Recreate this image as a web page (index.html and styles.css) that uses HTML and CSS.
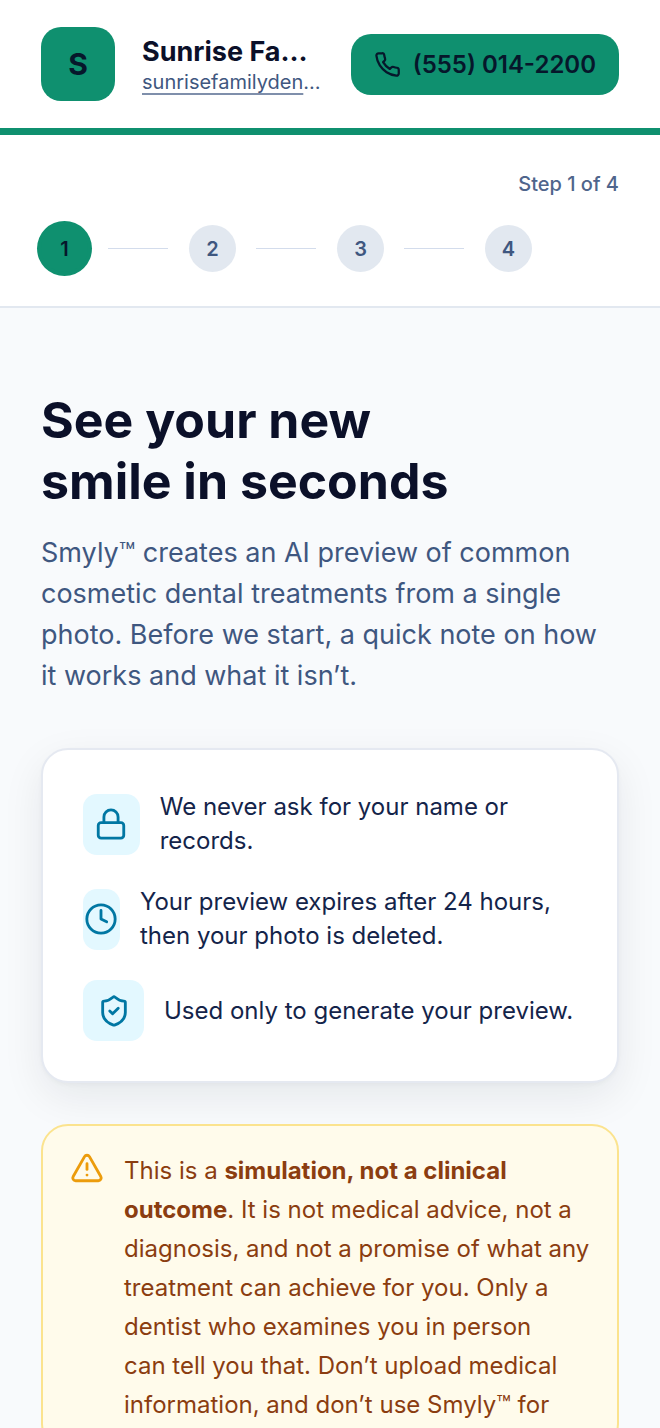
FILE: index.html
```html
<!DOCTYPE html>
<html lang="en">
<head>
    <meta charset="utf-8">
    <meta name="viewport" content="width=device-width, initial-scale=1">
    <title>Sunrise Family Dental</title>
    <link rel="stylesheet" href="styles.css">
</head>
<body>
    <header class="site-header">
        <div class="logo">S</div>
        <div class="clinic">
            <div class="clinic-name">Sunrise Family Dental</div>
            <div class="clinic-url"><a href="#">sunrisefamilydental.com</a></div>
        </div>
        <a class="call-button" href="tel:+15550142200">
            <svg class="icon" viewBox="0 0 24 24"><path d="M22 16.92v3a2 2 0 0 1-2.18 2 19.79 19.79 0 0 1-8.63-3.07 19.5 19.5 0 0 1-6-6 19.79 19.79 0 0 1-3.07-8.67A2 2 0 0 1 4.11 2h3a2 2 0 0 1 2 1.72 12.84 12.84 0 0 0 .7 2.81 2 2 0 0 1-.45 2.11L8.09 9.91a16 16 0 0 0 6 6l1.27-1.27a2 2 0 0 1 2.11-.45 12.84 12.84 0 0 0 2.81.7A2 2 0 0 1 22 16.92z"/></svg>
            (555) 014-2200
        </a>
    </header>

    <nav class="progress">
        <p class="progress-label">Step 1 of 4</p>
        <ol class="steps">
            <li class="step active"><span>1</span></li>
            <li class="step"><span>2</span></li>
            <li class="step"><span>3</span></li>
            <li class="step"><span>4</span></li>
        </ol>
    </nav>

    <main>
        <h1>See your new<br>smile in seconds</h1>
        <p class="lead">Smyly™ creates an AI preview of common cosmetic dental treatments from a single photo. Before we start, a quick note on how it works and what it isn’t.</p>

        <ul class="card">
            <li>
                <span class="icon-box">
                    <svg class="icon" viewBox="0 0 24 24"><rect x="3" y="11" width="18" height="11" rx="2"/><path d="M7 11V7a5 5 0 0 1 10 0v4"/></svg>
                </span>
                <span>We never ask for your name or records.</span>
            </li>
            <li>
                <span class="icon-box">
                    <svg class="icon" viewBox="0 0 24 24"><circle cx="12" cy="12" r="10"/><path d="M12 6v6l4 2"/></svg>
                </span>
                <span>Your preview expires after 24 hours, then your photo is deleted.</span>
            </li>
            <li>
                <span class="icon-box">
                    <svg class="icon" viewBox="0 0 24 24"><path d="M20 13c0 5-3.5 7.5-7.66 8.95a1 1 0 0 1-.67-.01C7.5 20.5 4 18 4 13V6a1 1 0 0 1 1-1c2 0 4.5-1.2 6.24-2.72a1.17 1.17 0 0 1 1.52 0C14.51 3.81 17 5 19 5a1 1 0 0 1 1 1z"/><path d="m9 12 2 2 4-4"/></svg>
                </span>
                <span>Used only to generate your preview.</span>
            </li>
        </ul>

        <div class="notice">
            <svg class="icon" viewBox="0 0 24 24"><path d="m21.73 18-8-14a2 2 0 0 0-3.48 0l-8 14A2 2 0 0 0 4 21h16a2 2 0 0 0 1.73-3"/><path d="M12 9v4"/><path d="M12 17h.01"/></svg>
            <p>This is a <strong>simulation, not a clinical outcome</strong>. It is not medical advice, not a diagnosis, and not a promise of what any treatment can achieve for you. Only a dentist who examines you in person<br>can tell you that. Don’t upload medical information, and don’t use Smyly™ for</p>
        </div>
    </main>
</body>
</html>
```
FILE: styles.css
```css
* {
    box-sizing: border-box;
}

body {
    margin: 0;
    background-color: #f8fafc;
    color: #0b1029;
    font-family: Inter, "Liberation Sans", sans-serif;
    font-size: 24px;
}

h1, p, ol, ul {
    margin: 0;
    padding: 0;
}

ol, ul {
    list-style: none;
}

.icon {
    width: 34px;
    height: 34px;
    flex-shrink: 0;
    fill: none;
    stroke: currentColor;
    stroke-width: 2;
    stroke-linecap: round;
    stroke-linejoin: round;
}

/* header */
.site-header {
    display: flex;
    align-items: center;
    gap: 27px;
    padding: 27px 41px;
    background-color: #fff;
    border-bottom: 7px solid #0f906f;
}

.logo {
    display: flex;
    align-items: center;
    justify-content: center;
    flex-shrink: 0;
    width: 74px;
    height: 74px;
    border-radius: 20px;
    background-color: #0f906f;
    color: #06172b;
    font-size: 30px;
    font-weight: 700;
}

.clinic {
    flex: 1;
    min-width: 0;
}

.clinic-name,
.clinic-url {
    overflow: hidden;
    text-overflow: ellipsis;
    white-space: nowrap;
}

.clinic-name {
    font-size: 27px;
    font-weight: 700;
    line-height: 35px;
}

.clinic-url {
    color: #3f5780;
    font-size: 20px;
    line-height: 26px;
}

.clinic-url a {
    color: inherit;
    text-decoration-color: #7f8fab;
    text-decoration-skip-ink: none;
    text-underline-offset: 4px;
}

.call-button {
    display: flex;
    align-items: center;
    flex-shrink: 0;
    gap: 12px;
    height: 61px;
    padding: 0 23px;
    border-radius: 20px;
    background-color: #0f906f;
    color: #06172b;
    font-weight: 600;
    text-decoration: none;
}

.call-button .icon {
    width: 27px;
    height: 27px;
}

/* progress */
.progress {
    padding: 35px 41px 34px;
    background-color: #fff;
    border-bottom: 2px solid #e2e8f0;
}

.progress-label {
    margin-bottom: 27px;
    color: #4f658c;
    font-size: 20px;
    font-weight: 500;
    line-height: 28px;
    text-align: right;
}

.steps {
    display: flex;
    gap: 14px;
}

.step {
    display: flex;
    align-items: center;
    flex: 1;
}

.step span {
    display: flex;
    align-items: center;
    justify-content: center;
    width: 47px;
    height: 47px;
    border-radius: 50%;
    background-color: #e2e8f0;
    color: #3f5780;
    font-size: 20px;
    font-weight: 600;
}

.step.active span {
    background-color: #0f906f;
    box-shadow: 0 0 0 4px #0f906f;
    color: #06172b;
}

.step:not(:last-child)::after {
    content: "";
    flex: 1;
    height: 1px;
    margin: 0 7px 0 20px;
    background-color: #d3dcec;
}

/* content */
main {
    padding: 82px 41px 0;
}

h1 {
    margin-bottom: 20px;
    font-size: 50px;
    font-weight: 700;
    line-height: 61px;
}

.lead {
    margin-bottom: 52px;
    color: #3f5780;
    font-size: 27px;
    line-height: 41px;
}

.card {
    display: flex;
    flex-direction: column;
    gap: 27px;
    margin-bottom: 41px;
    padding: 40px;
    border: 2px solid #e5e9f1;
    border-radius: 27px;
    background-color: #fff;
    box-shadow: 0 2px 4px rgba(15, 23, 42, 0.03), 0 14px 41px rgba(15, 23, 42, 0.08);
}

.card li {
    display: flex;
    align-items: center;
    gap: 20px;
    color: #14244a;
    line-height: 34px;
}

.icon-box {
    display: flex;
    align-items: center;
    justify-content: center;
    width: 61px;
    height: 61px;
    border-radius: 14px;
    background-color: #e3f8ff;
    color: #0077a3;
}

.notice {
    display: flex;
    align-items: flex-start;
    gap: 20px;
    padding: 25px 27px;
    border: 2px solid #fbe38e;
    border-radius: 27px;
    background-color: #fffbeb;
    color: #8b3d10;
    line-height: 39px;
}

.notice .icon {
    color: #ec9c0c;
}
```
